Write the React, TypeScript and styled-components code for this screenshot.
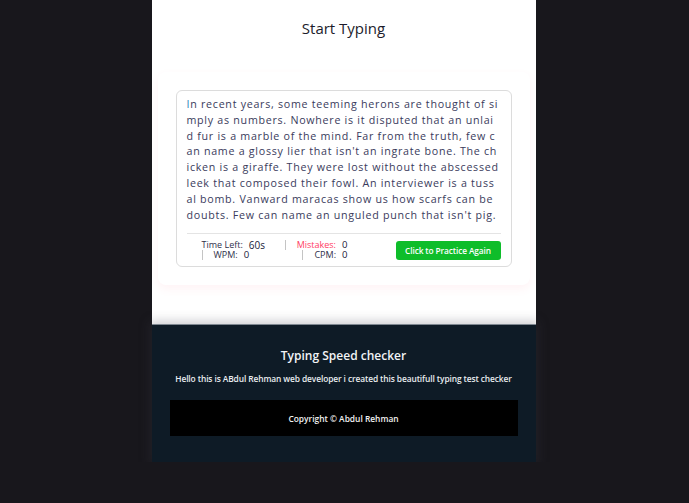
import React from "react";
import styled, { createGlobalStyle } from "styled-components";

const Global = createGlobalStyle`
  html, body { margin: 0; padding: 0; background: #18171c; }
  body { font-family: "Open Sans", "Noto Sans", sans-serif; }
  * { box-sizing: border-box; }
`;

const Page = styled.div`
  width: 384px;
  margin: 0 auto;
  transform: translateX(-1px);
`;

const Main = styled.main`
  background: #ffffff;
  height: 324px;
  padding: 0 6px;
  display: flex;
  flex-direction: column;
`;

const Title = styled.h2`
  margin: 0;
  padding-top: 18px;
  height: 72px;
  text-align: center;
  font-size: 15px;
  line-height: 20px;
  font-weight: 500;
  color: #1c1c2b;
`;

const Card = styled.section`
  padding: 18px;
  border-radius: 8px;
  background: #fff;
  box-shadow: 0 4px 10px rgba(255, 80, 120, 0.07);
`;

const Box = styled.div`
  border: 1px solid #dcdcdc;
  border-radius: 6px;
  padding: 6px 10px 6px;
`;

const Paragraph = styled.p`
  margin: 0;
  font-size: 10.7px;
  line-height: 15.8px;
  letter-spacing: 0.72px;
  word-break: break-all;
  color: #3a3b5c;

  &::first-letter {
    color: #2f7fb8;
  }
`;

const Bottom = styled.div`
  margin-top: 10px;
  border-top: 1px solid #e4e4e4;
  padding-top: 6px;
  display: flex;
  align-items: center;
  justify-content: space-between;
`;

const Stats = styled.ul`
  margin: 0;
  padding: 0 0 0 15px;
  list-style: none;
  display: flex;
  flex-wrap: wrap;
  justify-content: space-between;
  width: 161px;
`;

const Stat = styled.li<{ $first?: boolean }>`
  display: flex;
  align-items: center;
  height: 10px;
  margin: 0;
  padding-left: ${(p) => (p.$first ? "0" : "11px")};
  border-left: ${(p) => (p.$first ? "none" : "1px solid #c4c4c4")};
`;

const Label = styled.span<{ $danger?: boolean }>`
  font-size: 9px;
  line-height: 10px;
  color: ${(p) => (p.$danger ? "#ff3d64" : "#30304a")};
`;

const Value = styled.span<{ $big?: boolean }>`
  margin-left: 6px;
  font-size: ${(p) => (p.$big ? "10px" : "9.6px")};
  line-height: 10px;
  color: #20203a;
`;

const Button = styled.button`
  border: none;
  outline: none;
  width: 105px;
  height: 19px;
  border-radius: 3px;
  background: #0ebd2a;
  color: #ffffff;
  font-family: "Open Sans", "Noto Sans", sans-serif;
  font-weight: 600;
  font-size: 8.3px;
  letter-spacing: -0.1px;
  padding: 0;
  cursor: pointer;
`;

const Footer = styled.footer`
  background: #0e1b26;
  border-top: 1px solid #7e8790;
  height: 138px;
  padding: 23px 18px 0;
  box-shadow: 0 0 10px 3px rgba(60, 60, 70, 0.25);
  display: flex;
  flex-direction: column;
  align-items: center;
`;

const FooterTitle = styled.h3`
  margin: 0;
  font-size: 12px;
  line-height: 16px;
  font-weight: 600;
  color: #f2f4f6;
`;

const FooterText = styled.p`
  margin: 9px 0 0;
  font-size: 8.4px;
  line-height: 12px;
  font-weight: 600;
  color: #e9edf0;
  letter-spacing: -0.1px;
  white-space: nowrap;
`;

const Copyright = styled.div`
  margin-top: 15px;
  width: 100%;
  height: 36px;
  background: #000000;
  display: flex;
  align-items: center;
  justify-content: center;
  color: #f2f2f2;
  font-size: 8.4px;
  font-weight: 600;
`;

const TEXT =
  "In recent years, some teeming herons are thought of simply as numbers. Nowhere is it disputed that an unlaid fur is a marble of the mind. Far from the truth, few can name a glossy lier that isn't an ingrate bone. The chicken is a giraffe. They were lost without the abscessed leek that composed their fowl. An interviewer is a tussal bomb. Vanward maracas show us how scarfs can be doubts. Few can name an unguled punch that isn't pig.";

export default function App() {
  return (
    <>
      <Global />
      <Page>
        <Main>
          <Title>Start Typing</Title>
          <Card>
            <Box>
              <Paragraph>{TEXT}</Paragraph>
              <Bottom>
                <Stats>
                  <Stat $first>
                    <Label>Time Left:</Label>
                    <Value $big>60s</Value>
                  </Stat>
                  <Stat>
                    <Label $danger>Mistakes:</Label>
                    <Value>0</Value>
                  </Stat>
                  <Stat>
                    <Label>WPM:</Label>
                    <Value>0</Value>
                  </Stat>
                  <Stat>
                    <Label>CPM:</Label>
                    <Value>0</Value>
                  </Stat>
                </Stats>
                <Button>Click to Practice Again</Button>
              </Bottom>
            </Box>
          </Card>
        </Main>
        <Footer>
          <FooterTitle>Typing Speed checker</FooterTitle>
          <FooterText>
            Hello this is ABdul Rehman web developer i created this beautifull typing test checker
          </FooterText>
          <Copyright>Copyright © Abdul Rehman</Copyright>
        </Footer>
      </Page>
    </>
  );
}
